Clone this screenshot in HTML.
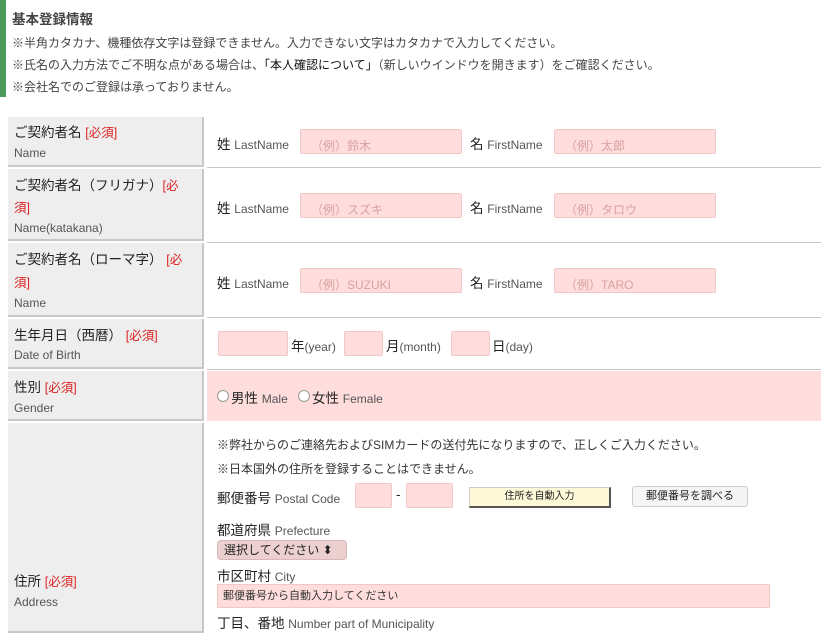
<!DOCTYPE html>
<html><head><meta charset="utf-8"><style>
body{margin:0;width:824px;height:628px;overflow:hidden;background:#fff;font-family:"Liberation Sans","Noto Sans CJK JP",sans-serif;color:#222;position:relative}
.a{position:absolute;white-space:nowrap}
.lab{position:absolute;left:8px;width:196px;background:#eee;border-bottom:2px solid #c8c8c8;border-right:2px solid #c8c8c8;box-sizing:border-box}
.val{position:absolute;left:207px;width:614px;border-bottom:1px solid #c8c8c8;box-sizing:border-box}
.jp{font-size:13.5px;color:#222}
.en{font-size:12px;color:#555}
.req{color:#d22;font-size:12.5px}
.in{position:absolute;background:#fdd;border:1px solid #f1c8c8;border-radius:2px;box-sizing:border-box;font-size:12px;color:#d9a0a0;padding:7px 0 0 10px}
.s{font-size:12px;color:#555}
</style></head><body>
<div class="a" style="left:0;top:0;width:6px;height:97px;background:#4a9a5a"></div>
<div class="a" style="left:12px;top:8px;font-size:13.5px;font-weight:bold;color:#444">基本登録情報</div>
<div class="a" style="left:12px;top:34px;font-size:12px;color:#444">※半角カタカナ、機種依存文字は登録できません。入力できない文字はカタカナで入力してください。</div>
<div class="a" style="left:12px;top:56px;font-size:12px;color:#444">※氏名の入力方法でご不明な点がある場合は、<span style="color:#111">「本人確認について」</span>（新しいウインドウを開きます）をご確認ください。</div>
<div class="a" style="left:12px;top:78px;font-size:12px;color:#444">※会社名でのご登録は承っておりません。</div>

<div class="lab" style="top:117px;height:50px"></div>
<div class="a jp" style="left:14px;top:121px">ご契約者名 <span class="req">[必須]</span></div>
<div class="a en" style="left:14px;top:146px">Name</div>
<div class="val" style="top:117px;height:51px"></div>
<div class="a jp" style="left:217px;top:133px">姓 <span class="s">LastName</span></div>
<div class="in" style="left:300px;top:129px;width:162px;height:25px">（例）鈴木</div>
<div class="a jp" style="left:470px;top:133px">名 <span class="s">FirstName</span></div>
<div class="in" style="left:554px;top:129px;width:162px;height:25px">（例）太郎</div>

<div class="lab" style="top:169px;height:72px"></div>
<div class="a jp" style="left:14px;top:174px">ご契約者名（フリガナ）<span class="req">[必</span></div>
<div class="a req" style="left:14px;top:197px">須]</div>
<div class="a en" style="left:14px;top:221px">Name(katakana)</div>
<div class="val" style="top:168px;height:75px"></div>
<div class="a jp" style="left:217px;top:197px">姓 <span class="s">LastName</span></div>
<div class="in" style="left:300px;top:193px;width:162px;height:25px">（例）スズキ</div>
<div class="a jp" style="left:470px;top:197px">名 <span class="s">FirstName</span></div>
<div class="in" style="left:554px;top:193px;width:162px;height:25px">（例）タロウ</div>

<div class="lab" style="top:243px;height:74px"></div>
<div class="a jp" style="left:14px;top:248px">ご契約者名（ローマ字） <span class="req">[必</span></div>
<div class="a req" style="left:14px;top:272px">須]</div>
<div class="a en" style="left:14px;top:296px">Name</div>
<div class="val" style="top:243px;height:75px"></div>
<div class="a jp" style="left:217px;top:272px">姓 <span class="s">LastName</span></div>
<div class="in" style="left:300px;top:268px;width:162px;height:25px">（例）SUZUKI</div>
<div class="a jp" style="left:470px;top:272px">名 <span class="s">FirstName</span></div>
<div class="in" style="left:554px;top:268px;width:162px;height:25px">（例）TARO</div>

<div class="lab" style="top:319px;height:50px"></div>
<div class="a jp" style="left:14px;top:324px">生年月日（西暦） <span class="req">[必須]</span></div>
<div class="a en" style="left:14px;top:348px">Date of Birth</div>
<div class="val" style="top:318px;height:52px"></div>
<div class="in" style="left:218px;top:331px;width:70px;height:25px"></div>
<div class="a jp" style="left:291px;top:335px">年<span class="s">(year)</span></div>
<div class="in" style="left:344px;top:331px;width:39px;height:25px"></div>
<div class="a jp" style="left:386px;top:335px">月<span class="s">(month)</span></div>
<div class="in" style="left:451px;top:331px;width:39px;height:25px"></div>
<div class="a jp" style="left:492px;top:335px">日<span class="s">(day)</span></div>

<div class="lab" style="top:371px;height:50px"></div>
<div class="a jp" style="left:14px;top:376px">性別 <span class="req">[必須]</span></div>
<div class="a en" style="left:14px;top:401px">Gender</div>
<div class="a" style="left:207px;top:371px;width:614px;height:50px;background:#fdd"></div>
<div class="a" style="left:217px;top:390px;width:12px;height:12px;border:1px solid #999;border-radius:50%;background:#fff;box-sizing:border-box"></div>
<div class="a jp" style="left:231px;top:387px">男性 <span class="s">Male</span></div>
<div class="a" style="left:298px;top:390px;width:12px;height:12px;border:1px solid #999;border-radius:50%;background:#fff;box-sizing:border-box"></div>
<div class="a jp" style="left:312px;top:387px">女性 <span class="s">Female</span></div>

<div class="lab" style="top:423px;height:210px"></div>
<div class="a jp" style="left:14px;top:570px">住所 <span class="req">[必須]</span></div>
<div class="a en" style="left:14px;top:595px">Address</div>
<div class="a" style="left:217px;top:436px;font-size:12px;color:#333">※弊社からのご連絡先およびSIMカードの送付先になりますので、正しくご入力ください。</div>
<div class="a" style="left:217px;top:460px;font-size:12px;color:#333">※日本国外の住所を登録することはできません。</div>
<div class="a jp" style="left:217px;top:487px">郵便番号 <span class="s">Postal Code</span></div>
<div class="in" style="left:355px;top:483px;width:37px;height:25px"></div>
<div class="a jp" style="left:396px;top:487px">-</div>
<div class="in" style="left:406px;top:483px;width:47px;height:25px"></div>
<div class="a" style="left:469px;top:487px;width:142px;height:21px;background:#fdf8d8;border:1px solid #ccc;border-right:2px solid #555;border-bottom:2px solid #555;box-sizing:border-box;font-size:10px;text-align:center;line-height:18px;color:#222">住所を自動入力</div>
<div class="a" style="left:632px;top:486px;width:116px;height:21px;background:#f5f5f5;border:1px solid #ccc;border-radius:3px;box-sizing:border-box;font-size:11px;text-align:center;line-height:19px;color:#222">郵便番号を調べる</div>
<div class="a jp" style="left:217px;top:519px">都道府県 <span class="s">Prefecture</span></div>
<div class="a" style="left:217px;top:540px;width:130px;height:20px;background:#ecd0d0;border:1px solid #d8b8b8;border-radius:4px;box-sizing:border-box;font-size:12px;line-height:18px;padding-left:6px">選択してください ⬍</div>
<div class="a jp" style="left:217px;top:565px">市区町村 <span class="s">City</span></div>
<div class="a" style="left:217px;top:584px;width:553px;height:24px;background:#fdd;border:1px solid #f1c8c8;box-sizing:border-box;font-size:11px;color:#333;line-height:22px;padding-left:5px">郵便番号から自動入力してください</div>
<div class="a jp" style="left:217px;top:612px">丁目、番地 <span class="s">Number part of Municipality</span></div>
</body></html>
